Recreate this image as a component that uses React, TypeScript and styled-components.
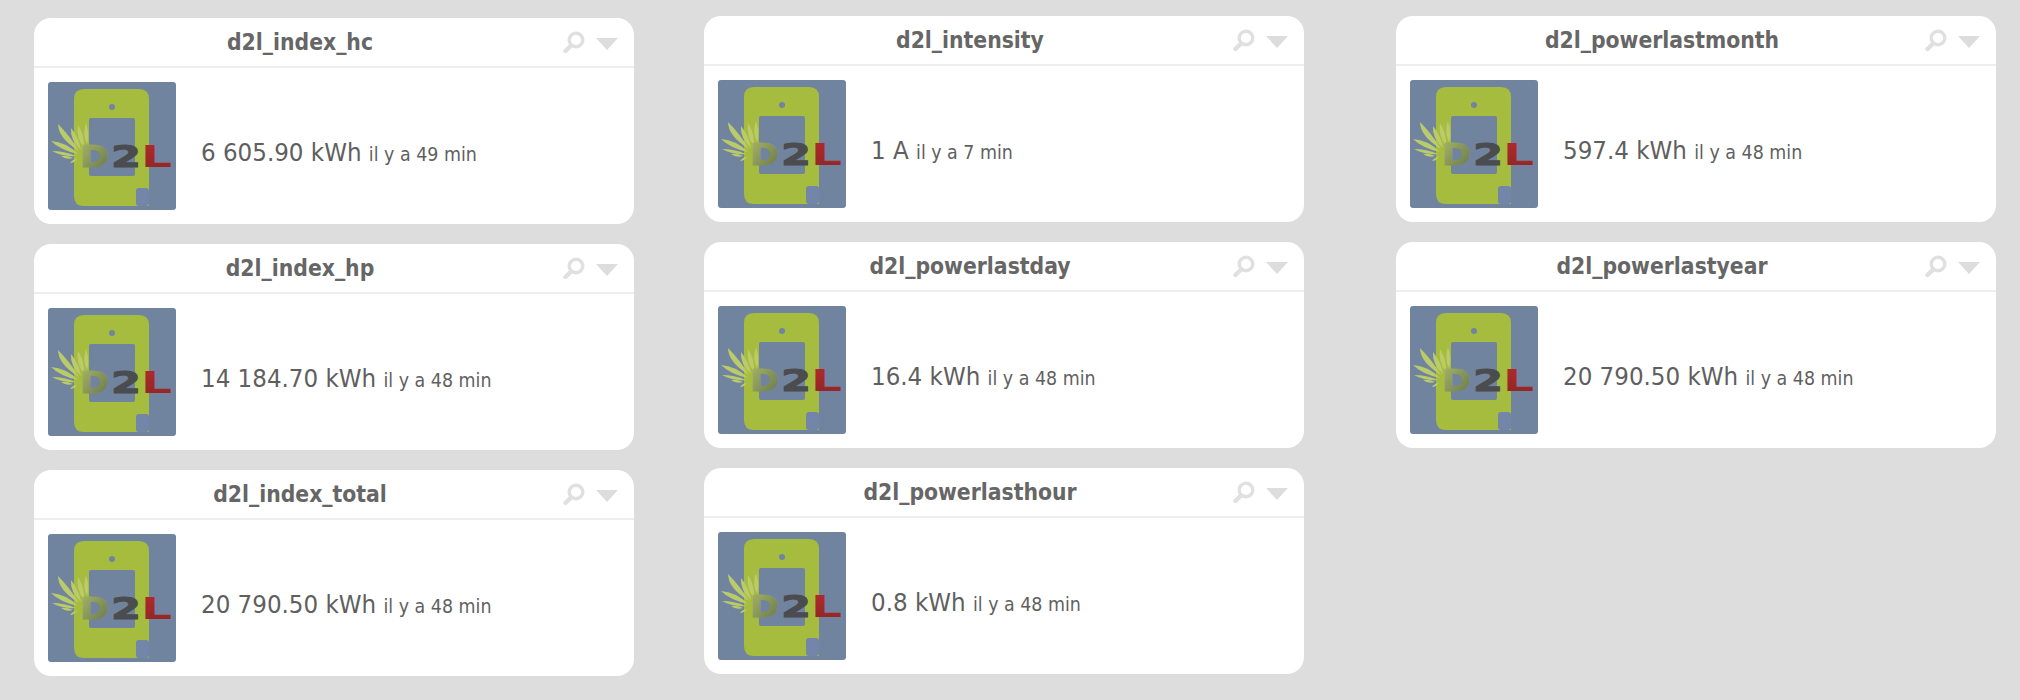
import * as React from 'react'
import styled, {createGlobalStyle} from 'styled-components'

const Global = createGlobalStyle`
    html,body{
        margin:0;
        padding:0;
        background:#ddd;
    }
`
const Page = styled.div`
    display:flex;
    align-items:flex-start;
    width:2020px;
    height:700px;
    overflow:hidden;
    background:#ddd;
    font-family:"DejaVu Sans",Verdana,sans-serif;
    font-stretch:condensed;
    color:#666;
`
const Column = styled.div<{$left:number,$top:number}>`
    display:flex;
    flex-direction:column;
    gap:20px;
    width:600px;
    margin-left:${p=>p.$left}px;
    padding-top:${p=>p.$top}px;
`
const Card = styled.div`
    display:flex;
    flex-direction:column;
    height:206px;
    box-sizing:border-box;
    background:#fff;
    border-radius:17px;
`
const Header = styled.div`
    display:flex;
    align-items:center;
    flex:none;
    height:48px;
    border-bottom:2px solid #eee;
`
const Title = styled.div`
    flex:1;
    padding-left:4px;
    text-align:center;
    font-size:22.7px;
    font-weight:bold;
    color:#666;
`
const Tools = styled.div`
    display:flex;
    align-items:center;
    gap:10px;
    width:72px;
    flex:none;
    svg{
        display:block;
        filter:blur(.5px);
    }
`
const Triangle = styled.svg`
    margin-top:3px;
`
const Body = styled.div`
    display:flex;
    align-items:center;
    flex:1;
    padding:14px;
`
const LogoSvg = styled.svg`
    display:block;
    flex:none;
    width:128px;
    height:128px;
    border-radius:3px;
    font-stretch:normal;
`
const Reading = styled.div`
    margin-left:25px;
    padding-top:12px;
    white-space:nowrap;
    font-size:25.6px;
    color:#5f5f5f;
`
const Since = styled.span`
    font-size:19.4px;
`

const feathers=[
    'M10 42 Q10 56 31 69 Q22 54 10 42Z',
    'M3 59 Q12 68 30 72 Q18 60 3 59Z',
    'M4 69 Q14 75 28 74 Q16 69 4 69Z',
    'M13 74 Q18 78 25 76 Q19 73 13 74Z',
    'M22 81 Q26 81 29 77 Q25 77 22 81Z',
    'M23 46 Q22 58 33 68 Q31 56 23 46Z',
    'M30 43 Q28 56 36 66 Q37 54 30 43Z',
    'M38 41 Q34 52 39 62 Q42 52 38 41Z',
]

const Logo=()=>{
    const id=React.useId()
    const letter={y:85,fontFamily:'DejaVu Sans',fontWeight:'bold',fontSize:30,lengthAdjust:'spacingAndGlyphs'} as const
    return(
        <LogoSvg viewBox="0 0 128 128">
            <defs>
                <linearGradient id={id+'d'} x1="0" y1="0" x2="1" y2="1">
                    <stop offset="0" stopColor="#a9b864"/>
                    <stop offset="1" stopColor="#66744c"/>
                </linearGradient>
                <linearGradient id={id+'l'} x1="0" y1="0" x2="0" y2="1">
                    <stop offset="0" stopColor="#b42a2a"/>
                    <stop offset="1" stopColor="#8e2626"/>
                </linearGradient>
            </defs>
            <rect width="128" height="128" fill="#71849f"/>
            <path d="M36 7H91Q101 7 101 17V124H36Q26 124 26 114V17Q26 7 36 7Z" fill="#a5bc3f"/>
            <circle cx="64" cy="25" r="3" fill="#71849f"/>
            <rect x="41" y="36" width="46" height="58" rx="2" fill="#71849f"/>
            <rect x="88" y="106" width="13" height="18" rx="3" fill="#7385a8"/>
            {feathers.map(d=><path key={d} d={d} fill="#bccb6a"/>)}
            <text {...letter} x="32" textLength="29" fill={`url(#${id}d)`} stroke={`url(#${id}d)`} strokeWidth="1">D</text>
            <text {...letter} x="63" textLength="30" fill="#4b4c4f" stroke="#4b4c4f" strokeWidth="1">2</text>
            <text {...letter} x="93" textLength="31" fill={`url(#${id}l)`}>L</text>
        </LogoSvg>
    )
}

const Tool=()=>(
    <Tools>
        <svg width="24" height="24" viewBox="0 0 24 24">
            <circle cx="14" cy="10" r="6.8" fill="none" stroke="#e0e0e0" strokeWidth="3.4"/>
            <path d="M9 15.5L3.5 21" stroke="#e0e0e0" strokeWidth="4.4" strokeLinecap="round"/>
        </svg>
        <Triangle width="22" height="12" viewBox="0 0 22 12">
            <path d="M0 0H22L11 12Z" fill="#ddd"/>
        </Triangle>
    </Tools>
)

type Item={name:string,value:string,since:string}

const Widget=({name,value,since}:Item)=>(
    <Card>
        <Header>
            <Title>{name}</Title>
            <Tool/>
        </Header>
        <Body>
            <Logo/>
            <Reading>{value} <Since>{since}</Since></Reading>
        </Body>
    </Card>
)

const columns:{left:number,top:number,items:Item[]}[]=[
    {left:34,top:18,items:[
        {name:'d2l_index_hc',value:'6 605.90 kWh',since:'il y a 49 min'},
        {name:'d2l_index_hp',value:'14 184.70 kWh',since:'il y a 48 min'},
        {name:'d2l_index_total',value:'20 790.50 kWh',since:'il y a 48 min'},
    ]},
    {left:70,top:16,items:[
        {name:'d2l_intensity',value:'1 A',since:'il y a 7 min'},
        {name:'d2l_powerlastday',value:'16.4 kWh',since:'il y a 48 min'},
        {name:'d2l_powerlasthour',value:'0.8 kWh',since:'il y a 48 min'},
    ]},
    {left:92,top:16,items:[
        {name:'d2l_powerlastmonth',value:'597.4 kWh',since:'il y a 48 min'},
        {name:'d2l_powerlastyear',value:'20 790.50 kWh',since:'il y a 48 min'},
    ]},
]

export default function App(){
    return(
        <Page>
            <Global/>
            {columns.map(c=>(
                <Column key={c.left} $left={c.left} $top={c.top}>
                    {c.items.map(i=><Widget key={i.name} {...i}/>)}
                </Column>
            ))}
        </Page>
    )
}
